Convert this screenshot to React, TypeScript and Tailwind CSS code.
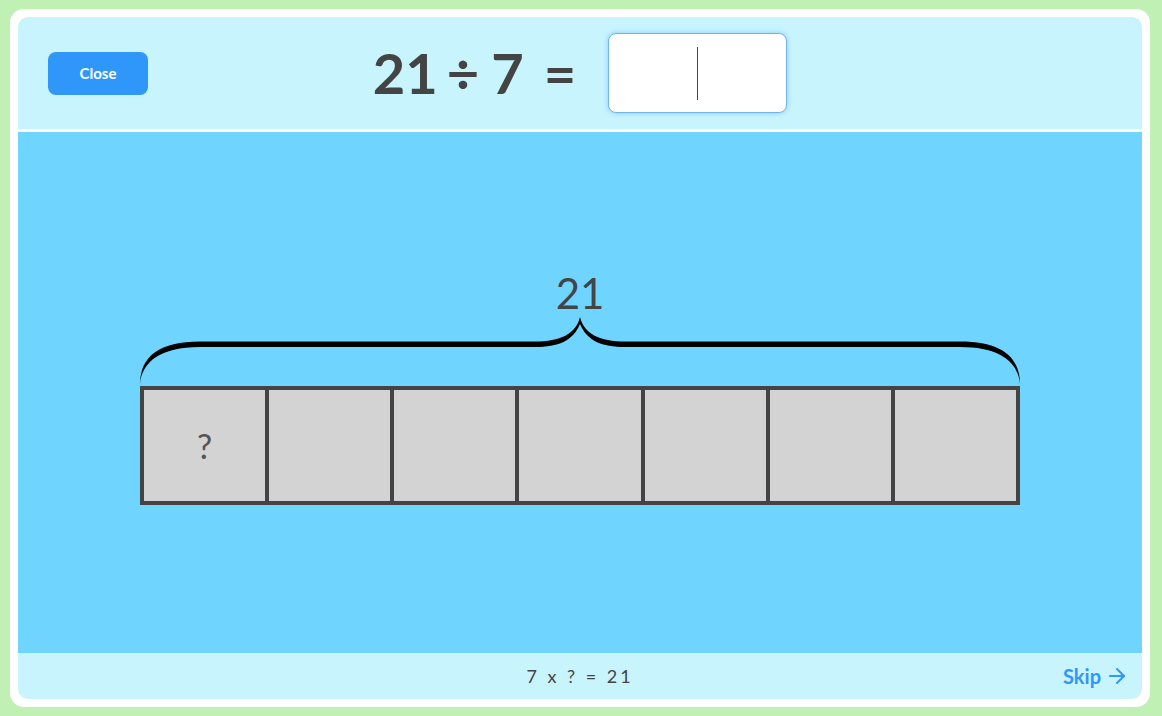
import React from "react";
import { ArrowRight } from "lucide-react";

const font = { fontFamily: "Lato, 'Noto Sans', sans-serif" };

const Brace: React.FC = () => (
  <svg width="880" height="72" viewBox="0 0 880 72" className="block">
    <path
      fill="#000"
      d="M 0 70 C 0 42 20 27.5 60 27.5 L 395 27.5 C 420 27.5 436 20 440 3 C 444 20 460 27.5 485 27.5 L 820 27.5 C 860 27.5 880 42 880 70 C 878 48 860 33 820 33 L 485 33 C 462 33 447 27 440 10 C 433 27 418 33 395 33 L 60 33 C 20 33 2 48 0 70 Z"
    />
  </svg>
);

const App: React.FC = () => {
  const cells = Array.from({ length: 7 });

  return (
    <div
      className="h-[716px] w-[1162px] bg-[#c0f0b4] pl-[10px] pr-[12px] py-[9px]"
      style={font}
    >
      <div className="h-full rounded-[14px] bg-white p-2">
        <div className="flex h-full flex-col overflow-hidden rounded-[10px]">
          {/* Header */}
          <div className="grid h-[112px] shrink-0 grid-cols-[1fr_auto_1fr] items-center bg-[#c8f4fe]">
            <div className="pl-[30px]">
              <button className="h-[43px] w-[100px] rounded-[8px] bg-[#2f96fa] text-[15px] font-bold text-white">
                Close
              </button>
            </div>
            <div className="flex items-center">
              <div className="flex items-center text-[56px] font-bold leading-none text-[#444]">
                <span>21</span>
                <span className="ml-[9px]">÷</span>
                <span className="ml-[12px]">7</span>
                <span className="ml-[20px]">=</span>
              </div>
              <div className="ml-[32px] flex h-[80px] w-[179px] items-center justify-center rounded-[8px] border border-[#72b4f2] bg-white shadow-[0_0_5px_rgba(100,170,240,0.6)]">
                <div className="h-[53px] w-px bg-[#444]" />
              </div>
            </div>
            <div />
          </div>

          <div className="h-[3px] shrink-0 bg-white" />

          {/* Main */}
          <div className="flex flex-1 flex-col items-center justify-center bg-[#6fd4fe] pb-[8px]">
            <div className="text-[42px] leading-none text-[#444]">21</div>
            <Brace />
            <div className="grid w-[880px] grid-cols-7 gap-[4px] bg-[#444] p-[4px]">
              {cells.map((_, i) => (
                <div
                  key={i}
                  className="flex h-[111px] items-center justify-center bg-[#d3d3d3] text-[34px] text-[#555]"
                >
                  {i === 0 ? "?" : ""}
                </div>
              ))}
            </div>
          </div>

          {/* Footer */}
          <div className="relative flex h-[46px] shrink-0 items-center justify-center bg-[#c8f4fe]">
            <span className="text-[18px] tracking-[3px] text-[#444]">
              7 x ? = 21
            </span>
            <button className="absolute right-[13px] flex items-center gap-[4px] text-[20px] font-bold text-[#3096fa]">
              Skip
              <ArrowRight className="h-[24px] w-[24px]" strokeWidth={2} />
            </button>
          </div>
        </div>
      </div>
    </div>
  );
};

export default App;
